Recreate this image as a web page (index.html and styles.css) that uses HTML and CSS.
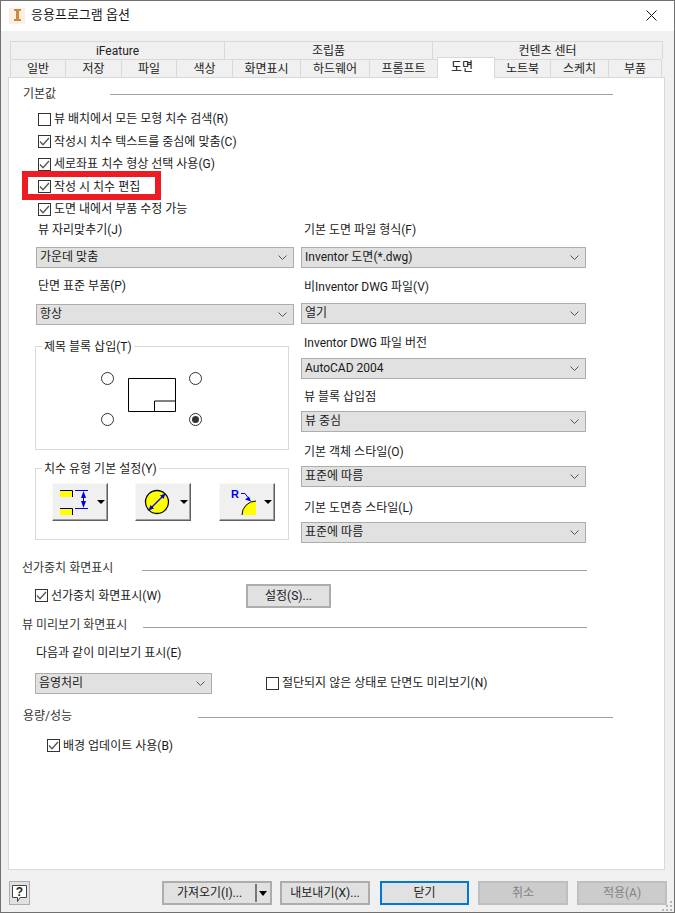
FILE: index.html
```html
<!DOCTYPE html>
<html lang="ko">
<head>
<meta charset="utf-8">
<title>응용프로그램 옵션</title>
<link rel="stylesheet" href="styles.css">
</head>
<body>
<div class="window">
  <header class="titlebar">
    <svg class="app-icon" width="16" height="16" viewBox="0 0 16 16"><rect width="16" height="16" fill="#fdeedf"/><path d="M5 1h7v2H10v8h2v2H5v-2h2V3H5z" fill="#c88b45"/></svg>
    <span class="title-text">응용프로그램 옵션</span>
    <svg class="close" width="11" height="11" viewBox="0 0 11 11"><path d="M.5.500l10 10M10.500.500l-10 10" stroke="#111" fill="none"/></svg>
  </header>

  <div class="tabs">
    <div class="tab-row upper">
      <div class="tab t214">iFeature</div><div class="tab t208">조립품</div><div class="tab t230">컨텐츠 센터</div>
    </div>
    <div class="tab-row lower">
      <div class="tab t55">일반</div><div class="tab t56">저장</div><div class="tab t55">파일</div><div class="tab t56">색상</div><div class="tab t68">화면표시</div><div class="tab t69">하드웨어</div><div class="tab t68">프롬프트</div><div class="tab t58 active">도면</div><div class="tab t56">노트북</div><div class="tab t58">스케치</div><div class="tab t53">부품</div>
    </div>
  </div>

  <main class="panel">
    <div class="head h-a"><span>기본값</span><i class="rule"></i></div>

    <div class="checks">
      <label class="check"><span class="box"></span>뷰 배치에서 모든 모형 치수 검색(R)</label>
      <label class="check"><span class="box"><svg viewBox="0 0 13 13"><path d="M2 6.500l3 3.200L11 3" /></svg></span>작성시 치수 텍스트를 중심에 맞춤(C)</label>
      <label class="check"><span class="box"><svg viewBox="0 0 13 13"><path d="M2 6.500l3 3.200L11 3" /></svg></span>세로좌표 치수 형상 선택 사용(G)</label>
      <label class="check"><span class="box"><svg viewBox="0 0 13 13"><path d="M2 6.500l3 3.200L11 3" /></svg></span>작성 시 치수 편집</label>
      <label class="check"><span class="box"><svg viewBox="0 0 13 13"><path d="M2 6.500l3 3.200L11 3" /></svg></span>도면 내에서 부품 수정 가능</label>
      <div class="highlight"></div>
    </div>

    <div class="columns">
      <div class="col-left">
        <div class="field">
          <div class="label">뷰 자리맞추기(J)</div>
          <div class="combo"><span>가운데 맞춤</span><svg viewBox="0 0 9 5"><path d="M.5.500l4 4 4-4"/></svg></div>
        </div>
        <div class="field">
          <div class="label">단면 표준 부품(P)</div>
          <div class="combo"><span>항상</span><svg viewBox="0 0 9 5"><path d="M.5.500l4 4 4-4"/></svg></div>
        </div>
        <fieldset class="group g-title">
          <legend>제목 블록 삽입(T)</legend>
          <div class="title-grid">
            <span class="radio"></span>
            <svg class="sheet" width="48" height="34" viewBox="0 0 48 34"><path d="M.5.500h47v33H.5zM26.500 33.500V23H47.500" fill="#fff" stroke="#000"/></svg>
            <span class="radio"></span>
            <span class="radio"></span>
            <span class="radio on"></span>
          </div>
        </fieldset>
        <fieldset class="group g-dim">
          <legend>치수 유형 기본 설정(Y)</legend>
          <div class="dim-buttons">
            <div class="tool">
              <svg width="38" height="30" viewBox="0 0 38 30"><path d="M0 4h12v6H0zM0 22h12v6H0z" fill="#ffff00"/><path d="M0 3.500h12.500V10M0 21.500h12.500V28" fill="none" stroke="#000"/><path d="M15 3.500h13M15 21.500h13M23.500 8v10" stroke="#0000e8" fill="none"/><path d="M23.500 4l-2.500 7h5zM23.500 21l-2.500-7h5z" fill="#0000e8"/></svg>
              <span class="arrow"></span>
            </div>
            <div class="tool tool-circle">
              <svg width="26" height="26" viewBox="0 0 26 26"><circle cx="13" cy="13" r="11.500" fill="#ffff00" stroke="#000" stroke-width="1.300"/><path d="M6 20L20 6" stroke="#0000e8" stroke-width="1.300"/><path d="M4.500 21.500l2-5.500 3.500 3.500zM21.500 4.500l-2 5.500-3.500-3.500z" fill="#0000e8"/></svg>
              <span class="arrow"></span>
            </div>
            <div class="tool">
              <svg width="38" height="32" viewBox="0 0 38 32"><path d="M15 29A14 14 0 0 1 29 15V29Z" fill="#ffff00"/><path d="M15 29A14 14 0 0 1 29 15" fill="none" stroke="#000"/><path d="M14 7.500h4l3 4" fill="none" stroke="#0000e8"/><path d="M24 15.500l-6-2 4-3z" fill="#0000e8"/><text x="4" y="12" class="r-text">R</text></svg>
              <span class="arrow"></span>
            </div>
          </div>
        </fieldset>
      </div>

      <div class="col-right">
        <div class="field">
          <div class="label">기본 도면 파일 형식(F)</div>
          <div class="combo"><span>Inventor 도면(*.dwg)</span><svg viewBox="0 0 9 5"><path d="M.5.500l4 4 4-4"/></svg></div>
        </div>
        <div class="field">
          <div class="label">비Inventor DWG 파일(V)</div>
          <div class="combo"><span>열기</span><svg viewBox="0 0 9 5"><path d="M.5.500l4 4 4-4"/></svg></div>
        </div>
        <div class="field">
          <div class="label">Inventor DWG 파일 버전</div>
          <div class="combo"><span>AutoCAD 2004</span><svg viewBox="0 0 9 5"><path d="M.5.500l4 4 4-4"/></svg></div>
        </div>
        <div class="field">
          <div class="label">뷰 블록 삽입점</div>
          <div class="combo"><span>뷰 중심</span><svg viewBox="0 0 9 5"><path d="M.5.500l4 4 4-4"/></svg></div>
        </div>
        <div class="field">
          <div class="label">기본 객체 스타일(O)</div>
          <div class="combo"><span>표준에 따름</span><svg viewBox="0 0 9 5"><path d="M.5.500l4 4 4-4"/></svg></div>
        </div>
        <div class="field">
          <div class="label">기본 도면층 스타일(L)</div>
          <div class="combo"><span>표준에 따름</span><svg viewBox="0 0 9 5"><path d="M.5.500l4 4 4-4"/></svg></div>
        </div>
      </div>
    </div>

    <div class="head h-b"><span>선가중치 화면표시</span><i class="rule"></i></div>
    <div class="line-row">
      <label class="check"><span class="box"><svg viewBox="0 0 13 13"><path d="M2 6.500l3 3.200L11 3" /></svg></span>선가중치 화면표시(W)</label>
      <button class="btn settings">설정(S)...</button>
    </div>

    <div class="head h-c"><span>뷰 미리보기 화면표시</span><i class="rule"></i></div>
    <div class="preview-label">다음과 같이 미리보기 표시(E)</div>
    <div class="preview-row">
      <div class="combo small"><span>음영처리</span><svg viewBox="0 0 9 5"><path d="M.5.500l4 4 4-4"/></svg></div>
      <label class="check"><span class="box"></span>절단되지 않은 상태로 단면도 미리보기(N)</label>
    </div>

    <div class="head h-d"><span>용량/성능</span><i class="rule"></i></div>
    <label class="check bg-update"><span class="box"><svg viewBox="0 0 13 13"><path d="M2 6.500l3 3.200L11 3" /></svg></span>배경 업데이트 사용(B)</label>
  </main>

  <footer class="footer">
    <div class="help">
      <svg width="19" height="22" viewBox="0 0 19 22"><path d="M2.500 3.500h14v12H10l-2.500 4v-4h-5z" fill="#fff" stroke="#444"/><text x="9.500" y="14" class="q-text">?</text></svg>
    </div>
    <div class="split"><span class="split-main">가져오기(I)...</span><span class="split-drop"></span></div>
    <button class="btn export">내보내기(X)...</button>
    <button class="btn primary">닫기</button>
    <button class="btn disabled">취소</button>
    <button class="btn disabled last">적용(A)</button>
    <svg class="grip" width="11" height="11" viewBox="0 0 11 11"><path d="M8 0h2v2H8zM4 4h2v2H4zM8 4h2v2H8zM0 8h2v2H0zM4 8h2v2H4zM8 8h2v2H8z" fill="#b5b5b5"/></svg>
  </footer>
</div>
</body>
</html>
```

FILE: styles.css
```css
* { box-sizing: border-box; }
html, body { margin: 0; padding: 0; }
body {
  width: 675px;
  height: 913px;
  font: 12px/18px Roboto, "Noto Sans CJK KR", sans-serif;
  color: #1a1a1a;
  overflow: hidden;
}
.window {
  width: 675px;
  height: 913px;
  background: #f0f0f0;
  border: 1px solid #707070;
  display: flex;
  flex-direction: column;
}
.titlebar {
  height: 30px;
  flex: none;
  background: #fff;
  display: flex;
  align-items: center;
  padding: 0 17px 1px 8px;
}
.title-text { margin: -2px 0 0 6px; font-size: 13px; }
.close { margin-left: auto; }

.tabs { margin: 10px 0 0 9px; flex: none; }
.tab-row { display: flex; }
.upper { height: 18px; }
.lower { height: 18px; }
.tab {
  background: #f0f0f0;
  border: 1px solid #d9d9d9;
  border-bottom: 0;
  border-right: 0;
  text-align: center;
  line-height: 19px;
  color: #222;
}
.tab:last-child { border-right: 1px solid #d9d9d9; }
.t214 { width: 214px; }
.t208 { width: 208px; }
.t230 { width: 231px; }
.t55 { width: 55px; }
.t56 { width: 56px; }
.t58 { width: 58px; }
.t68 { width: 68px; }
.t69 { width: 69px; }
.t53 { width: 54px; }
.active {
  background: #fff;
  height: 21px;
  margin-top: -2px;
  position: relative;
  z-index: 1;
  border-right: 1px solid #d9d9d9;
  margin-right: -1px;
  padding-right: 8px;
  color: #000;
}

.panel {
  margin: 0 9px 0 7px;
  width: 657px;
  height: 793px;
  flex: none;
  background: #fff;
  border: 1px solid #d9d9d9;
  padding-top: 6px;
}
.head {
  display: flex;
  align-items: center;
  height: 20px;
  color: #333;
}
.head span { flex: none; }
.rule { display: block; height: 1px; background: #a0a0a0; flex: none; }
.h-a { padding-left: 14px; }
.h-a span { width: 87px; }
.h-a .rule { width: 503px; }
.h-b { margin-top: 15px; padding-left: 13px; }
.h-b span { width: 120px; }
.h-b .rule { width: 445px; margin-top: 6px; }
.h-c { margin-top: 7px; padding-left: 13px; }
.h-c span { width: 121px; }
.h-c .rule { width: 444px; margin-top: 6px; }
.h-d { margin-top: 12px; padding-left: 14px; }
.h-d span { width: 175px; }
.h-d .rule { width: 415px; margin-top: 4px; }

.checks {
  position: relative;
  margin-top: 4px;
  padding-left: 29px;
  height: 111.500px;
}
.checks .check { height: 22.500px; }
.check {
  display: flex;
  align-items: center;
  white-space: nowrap;
  color: #1a1a1a;
}
.box {
  width: 13px;
  height: 13px;
  flex: none;
  background: #fff;
  border: 1px solid #333;
  margin-right: 3px;
  position: relative;
}
.box svg {
  position: absolute;
  left: -1px;
  top: -1px;
  width: 13px;
  height: 13px;
  fill: none;
  stroke: #555;
  stroke-width: 1.300;
}
.highlight {
  position: absolute;
  left: 13px;
  top: 63px;
  width: 139px;
  height: 29px;
  border: 6px solid #ed1c24;
  pointer-events: none;
}

.columns {
  display: grid;
  grid-template-columns: 259px 285px;
  column-gap: 7px;
  padding-left: 26px;
  height: 323px;
}
.col-left { display: flex; flex-direction: column; }
.col-right { display: flex; flex-direction: column; }
.label { height: 18px; padding-left: 3px; color: #1a1a1a; white-space: nowrap; }
.field { flex: none; }
.combo {
  height: 21px;
  background: #e1e1e1;
  border: 1px solid #adadad;
  display: flex;
  align-items: center;
  padding: 0 3px;
  color: #1a1a1a;
  white-space: nowrap;
}
.combo svg {
  margin-left: auto;
  margin-right: 3px;
  width: 9px;
  height: 5px;
  flex: none;
  fill: none;
  stroke: #555;
}
.col-left .field .combo { margin-top: 8px; margin-left: 1px; }
.col-left .field:nth-child(1) { margin-top: 1px; }
.col-left .field:nth-child(2) { margin-top: 9px; }
.col-left .field:nth-child(2) .combo { margin-top: 9px; }

.col-right .field:nth-child(1) { margin-top: 1px; }
.col-right .field:nth-child(1) .combo { margin-top: 8px; }
.col-right .field:nth-child(2) { margin-top: 10px; }
.col-right .field:nth-child(2) .combo { margin-top: 7px; }
.col-right .field:nth-child(3) { margin-top: 10px; }
.col-right .field:nth-child(3) .combo { margin-top: 6px; }
.col-right .field:nth-child(4) { margin-top: 9px; }
.col-right .field:nth-child(4) .combo { margin-top: 5px; }
.col-right .field:nth-child(5) { margin-top: 11px; }
.col-right .field:nth-child(5) .combo { margin-top: 5px; }
.col-right .field:nth-child(6) { margin-top: 12px; }
.col-right .field:nth-child(6) .combo { margin-top: 5px; }

.group {
  margin: 0;
  padding: 0;
  width: 254px;
  border: 1px solid #d9d9d9;
  min-width: 0;
}
.group legend {
  margin-left: 6px;
  padding: 0 2px;
  line-height: 16px;
  color: #1a1a1a;
}
.g-title { margin-top: 14px; height: 111px; }
.g-dim { margin-top: 11px; height: 79px; }
.title-grid {
  display: grid;
  grid-template-columns: 13px 48px 13px;
  grid-template-rows: 13px 13px;
  column-gap: 13.500px;
  row-gap: 28px;
  margin: 17px 0 0 65px;
  align-items: center;
}
.sheet { grid-row: 1 / span 2; grid-column: 2; align-self: start; margin-top: 6px; }
.title-grid .radio:nth-child(1) { grid-column: 1; grid-row: 1; }
.title-grid .radio:nth-child(3) { grid-column: 3; grid-row: 1; }
.title-grid .radio:nth-child(4) { grid-column: 1; grid-row: 2; }
.title-grid .radio:nth-child(5) { grid-column: 3; grid-row: 2; }
.radio {
  width: 13px;
  height: 13px;
  border: 1px solid #333;
  border-radius: 50%;
  background: #fff;
  display: block;
  position: relative;
}
.radio.on::after {
  content: "";
  position: absolute;
  left: 2px;
  top: 2px;
  width: 7px;
  height: 7px;
  border-radius: 50%;
  background: #333;
}
.dim-buttons {
  display: flex;
  gap: 27px;
  margin: 6px 0 0 16px;
}
.dim-buttons .tool + .tool + .tool { margin-left: 1px; }
.tool {
  width: 56px;
  height: 38px;
  background: #f0f0f0;
  border: 1px solid;
  border-color: #f8f8f8 #606060 #606060 #f8f8f8;
  box-shadow: inset -1px -1px 0 #a0a0a0;
  display: flex;
  align-items: center;
  padding-left: 7px;
  position: relative;
}
.tool-circle { padding-left: 8px; }
.arrow {
  position: absolute;
  right: 2px;
  top: 16px;
  width: 0;
  height: 0;
  border-left: 4px solid transparent;
  border-right: 4px solid transparent;
  border-top: 4px solid #000;
}
.r-text { font: bold 11px "Liberation Sans", sans-serif; fill: #0000e8; }

.line-row {
  display: flex;
  align-items: center;
  height: 24px;
  margin-top: 6px;
  padding-left: 26px;
}
.line-row .check { width: 211px; }
.btn {
  font: inherit;
  height: 24px;
  background: #e1e1e1;
  border: 2px solid #adadad;
  padding: 0;
  color: #1a1a1a;
  line-height: 18px;
}
.settings { width: 85px; }
.preview-label { margin-top: 9px; padding-left: 27px; height: 18px; }
.preview-row {
  display: flex;
  align-items: center;
  margin-top: 11px;
  padding-left: 26px;
}
.combo.small { width: 177px; margin-right: 54px; }
.bg-update { margin: 11px 0 0 38px; height: 18px; width: 300px; }

.footer {
  display: flex;
  align-items: flex-start;
  flex: 1;
  padding: 11px 0 0 8px;
  position: relative;
}
.help {
  width: 21px;
  height: 24px;
  background: #e1e1e1;
  border: 1px solid #adadad;
  display: flex;
  margin-right: 132px;
}
.q-text { font: bold 12px "Liberation Sans", sans-serif; text-anchor: middle; fill: #222; }
.split {
  width: 110px;
  height: 24px;
  background: #e1e1e1;
  border: 2px solid #adadad;
  display: flex;
  align-items: center;
  margin-right: 8px;
}
.split-main { width: 93px; text-align: center; border-right: 2px solid #777; height: 18px; flex: none; }
.split-drop {
  margin-left: 2px;
  width: 0;
  height: 0;
  border-left: 4.500px solid transparent;
  border-right: 4.500px solid transparent;
  border-top: 5px solid #000;
}
.export { width: 90px; margin-right: 10px; }
.primary { width: 89px; margin-right: 9px; border-color: #0078d7; }
.disabled { width: 90px; margin-right: 9px; background: #ccc; border-color: #bfbfbf; color: #838383; }
.disabled.last { margin-right: 0; }
.grip { position: absolute; right: 1px; bottom: 0; }
```
